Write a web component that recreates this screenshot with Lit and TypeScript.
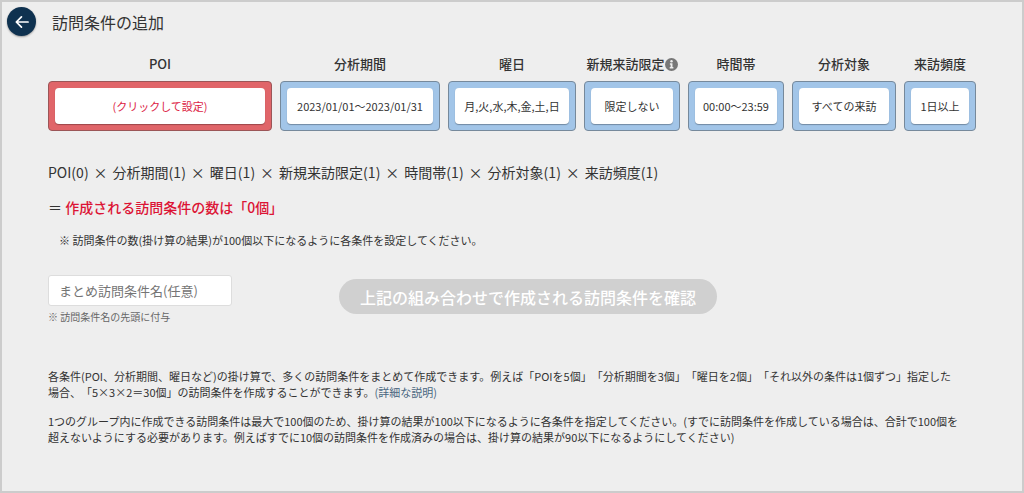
import { LitElement, html, css, svg, nothing } from "lit";
import { customElement, property, state } from "lit/decorators.js";
import { classMap } from "lit/directives/class-map.js";

interface Condition {
  name: string;
  value: string;
  count: number;
  info?: boolean;
}

const arrowIcon = svg`<path d="M18.6 12H6M11.4 6.4L5.8 12l5.6 5.6" fill="none" stroke="currentColor" stroke-width="1.9" stroke-linecap="round" stroke-linejoin="round"/>`;

@customElement("condition-card")
class ConditionCard extends LitElement {
  @property({ attribute: false }) condition!: Condition;

  static styles = css`
    :host {
      display: flex;
      flex-direction: column;
      gap: 7px;
      min-width: 0;
    }
    .name {
      display: flex;
      align-items: center;
      justify-content: center;
      height: 20px;
      font-size: 13px;
      font-weight: 500;
      line-height: 20px;
      white-space: nowrap;
      color: #333;
    }
    .info {
      flex: none;
      width: 13px;
      height: 13px;
    }
    .frame {
      padding: 6px;
      border: 1px solid #76899b;
      border-radius: 4px;
      background: #a2c5e8;
    }
    .frame.empty {
      border-color: #9b5557;
      background: #e06569;
    }
    .value {
      display: block;
      width: 100%;
      height: 36px;
      padding: 0;
      border: 0;
      border-radius: 4px;
      background: #fff;
      box-shadow: 0 1px 1px rgba(0, 0, 0, 0.3);
      color: #333;
      font: inherit;
      font-size: 11px;
      white-space: nowrap;
      cursor: pointer;
    }
    .empty .value {
      color: #dc2344;
    }
  `;

  render() {
    const { name, value, count, info } = this.condition;
    return html`
      <div class="name" id="name">
        <span>${name}</span>
        ${info
          ? html`<svg class="info" viewBox="0 0 16 16" role="img" aria-label="info">
              <circle cx="8" cy="8" r="8" fill="#777" />
              <circle cx="8" cy="4.1" r="1.5" fill="#eee" />
              <path d="M6 6.6h3.2v4.6h1.1v1.6H5.8v-1.6h1.1V8.2H6z" fill="#eee" />
            </svg>`
          : nothing}
      </div>
      <div class=${classMap({ frame: true, empty: count === 0 })}>
        <button class="value" type="button" aria-describedby="name">${value}</button>
      </div>
    `;
  }
}

@customElement("app-root")
class AppRoot extends LitElement {
  @state() conditions: Condition[] = [
    { name: "POI", value: "(クリックして設定)", count: 0 },
    { name: "分析期間", value: "2023/01/01〜2023/01/31", count: 1 },
    { name: "曜日", value: "月,火,水,木,金,土,日", count: 1 },
    { name: "新規来訪限定", value: "限定しない", count: 1, info: true },
    { name: "時間帯", value: "00:00〜23:59", count: 1 },
    { name: "分析対象", value: "すべての来訪", count: 1 },
    { name: "来訪頻度", value: "1日以上", count: 1 },
  ];

  static styles = css`
    :host {
      display: block;
      font-family: "Noto Sans CJK JP", "Noto Sans", sans-serif;
      text-spacing-trim: space-all;
      color: #333;
    }
    * {
      box-sizing: border-box;
    }
    .page {
      min-height: 100vh;
      border: 2px solid #ccc;
      background: #eee;
    }
    .top {
      display: flex;
      align-items: center;
      gap: 16px;
      padding: 5px 5px 0;
    }
    .back {
      display: grid;
      place-items: center;
      width: 29px;
      height: 29px;
      padding: 0;
      border: 0;
      border-radius: 50%;
      background: #0f3250;
      box-shadow: 0 1px 2px rgba(0, 0, 0, 0.35);
      color: #fff;
      cursor: pointer;
    }
    .back svg {
      width: 22px;
      height: 22px;
    }
    h1 {
      margin: 0;
      font-size: 16px;
      font-weight: 400;
      line-height: 24px;
    }
    .content {
      padding: 0 46px;
    }
    .cards {
      display: grid;
      grid-template-columns: 28fr 20fr 16fr 12fr 12fr 13fr 9fr;
      gap: 8px;
      padding-top: 18px;
    }
    .formula {
      display: flex;
      flex-wrap: wrap;
      column-gap: 5px;
      margin: 30px 0 0;
      font-size: 14px;
      line-height: 22px;
    }
    .result {
      margin: 13px 0 0;
      font-size: 14px;
      line-height: 22px;
    }
    .result strong {
      font-weight: 500;
      color: #dc1435;
    }
    .limit {
      margin: 14px 0 0;
      padding-left: 11px;
      font-size: 11px;
      line-height: 16px;
    }
    .form {
      display: flex;
      align-items: flex-start;
      gap: 107px;
      margin-top: 27px;
    }
    .field {
      display: flex;
      flex-direction: column;
      gap: 3px;
      width: 184px;
    }
    .field input {
      width: 100%;
      height: 31px;
      padding: 0 10px;
      border: 1px solid #ddd;
      border-radius: 3px;
      background: #fff;
      font: inherit;
      font-size: 13px;
      color: #333;
    }
    .field input::placeholder {
      color: #757575;
      opacity: 1;
    }
    .field label {
      font-size: 10px;
      line-height: 16px;
      color: #666;
    }
    .submit {
      height: 35px;
      margin-top: 4px;
      padding: 0 21px;
      border: 0;
      border-radius: 18px;
      background: #d0d0d0;
      color: #fff;
      font: inherit;
      font-size: 16px;
      font-weight: 500;
      white-space: nowrap;
    }
    .help {
      padding: 43px 0 24px;
      font-size: 11px;
      line-height: 16px;
    }
    .help p {
      margin: 0 0 13px;
    }
    .help a {
      color: #4a6780;
      text-decoration: none;
    }
  `;

  render() {
    const total = this.conditions.reduce((n, c) => n * c.count, 1);
    return html`
      <main class="page">
        <header class="top">
          <button class="back" type="button" aria-label="戻る">
            <svg viewBox="0 0 24 24" aria-hidden="true">${arrowIcon}</svg>
          </button>
          <h1>訪問条件の追加</h1>
        </header>
        <div class="content">
          <section class="cards">
            ${this.conditions.map((c) => html`<condition-card .condition=${c}></condition-card>`)}
          </section>
          <p class="formula">
            ${this.conditions.map(
              (c, i) => html`${i ? html`<span>×</span>` : nothing}<span>${c.name}(${c.count})</span>`
            )}
          </p>
          <p class="result">＝ <strong>作成される訪問条件の数は「${total}個」</strong></p>
          <p class="limit">※ 訪問条件の数(掛け算の結果)が100個以下になるように各条件を設定してください。</p>
          <form class="form">
            <div class="field">
              <input id="summary" type="text" placeholder="まとめ訪問条件名(任意)" />
              <label for="summary">※ 訪問条件名の先頭に付与</label>
            </div>
            <button class="submit" type="button" ?disabled=${total === 0}>上記の組み合わせで作成される訪問条件を確認</button>
          </form>
          <section class="help">
            <p>
              各条件(POI、分析期間、曜日など)の掛け算で、多くの訪問条件をまとめて作成できます。例えば「POIを5個」「分析期間を3個」「曜日を2個」「それ以外の条件は1個ずつ」指定した<br />場合、「5×3×2＝30個」の訪問条件を作成することができます。<a href="#detail">(詳細な説明)</a>
            </p>
            <p>
              1つのグループ内に作成できる訪問条件は最大で100個のため、掛け算の結果が100以下になるように各条件を指定してください。(すでに訪問条件を作成している場合は、合計で100個を<br />超えないようにする必要があります。例えばすでに10個の訪問条件を作成済みの場合は、掛け算の結果が90以下になるようにしてください)
            </p>
          </section>
        </div>
      </main>
    `;
  }
}
